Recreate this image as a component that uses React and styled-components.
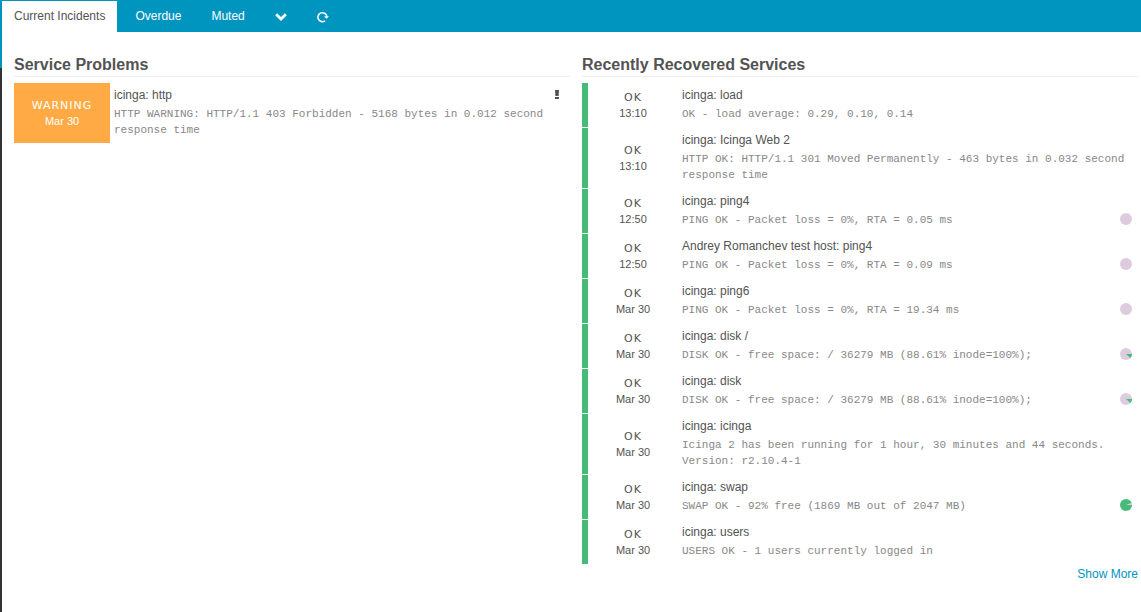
import React from "react";
import styled, { createGlobalStyle } from "styled-components";

const GlobalStyle = createGlobalStyle`
  * { box-sizing: border-box; }
  body {
    margin: 0;
    background: #fff;
    color: #535353;
    font: 12px/16px "Liberation Sans", Arial, sans-serif;
  }
`;

const Page = styled.div`
  display: flex;
  min-height: 100vh;
`;

const SidebarEdge = styled.div`
  flex: 0 0 2px;
  background: linear-gradient(#0095bf 68px, #333 68px);
`;

const Main = styled.main`
  flex: 1;
  min-width: 0;
`;

const TabBar = styled.nav`
  display: flex;
  gap: 6px;
  height: 32px;
  padding-top: 1px;
  background: #0095bf;
`;

const Tab = styled.a`
  padding: 0 12px;
  line-height: 31px;
  text-decoration: none;
  color: ${(p) => (p.$active ? "#535353" : "#fff")};
  background: ${(p) => (p.$active ? "#fff" : "transparent")};
`;

const TabButton = styled.button`
  display: flex;
  align-items: center;
  justify-content: center;
  width: 36px;
  padding: 0;
  border: 0;
  background: transparent;
  color: #fff;
`;

const Columns = styled.div`
  display: grid;
  grid-template-columns: 1fr 1fr;
  column-gap: 12px;
  align-items: start;
  padding: 22px 3px 0 12px;
`;

const Heading = styled.h1`
  margin: 0 0 5px;
  border-bottom: 1px solid #eee;
  font-size: 16px;
  line-height: 22px;
`;

const StateTable = styled.table`
  width: 100%;
  border-spacing: 0 1px;
`;

const StateCell = styled.td`
  width: 96px;
  padding: 2px 0 0;
  text-align: center;
  font-size: 11px;
  line-height: 16px;
  border-left: ${(p) => (p.$problem ? "0" : "6px solid #44bb77")};
  background: ${(p) => (p.$problem ? "#ffaa44" : "transparent")};
  color: ${(p) => (p.$problem ? "#fff" : "#535353")};
`;

const StateLabel = styled.div`
  letter-spacing: 1px;
  line-height: 14px;
  font-family: "DejaVu Sans", Verdana, sans-serif;
`;

const InfoCell = styled.td`
  padding: 4px 6px 5px 4px;
  vertical-align: top;
`;

const TitleLine = styled.div`
  display: flex;
  justify-content: space-between;
  height: 19px;
  padding-right: 4px;
`;

const OutputLine = styled.div`
  display: flex;
  justify-content: space-between;
  align-items: flex-start;
`;

const PieSlot = styled.span`
  padding-top: 1px;
`;

const Output = styled.p`
  margin: 0;
  color: #888;
  font: 11px/16px "Liberation Mono", "Courier New", monospace;
`;

const MoreLink = styled.a`
  display: block;
  width: fit-content;
  margin: 1px 0 0 auto;
  color: #0095bf;
  text-decoration: none;
`;

const Drawing = styled.svg`
  display: block;
  flex: none;
`;

const Chevron = () => (
  <Drawing width="12" height="8" viewBox="0 0 12 8" fill="none" stroke="currentColor" strokeWidth="2.8">
    <path d="M1.2 1.3 L6 6 L10.8 1.3" />
  </Drawing>
);

const Reload = () => (
  <Drawing width="12" height="12" viewBox="0 0 12 12">
    <path d="M8 9.9 A4.5 4.5 0 1 1 9.9 5.6" fill="none" stroke="currentColor" strokeWidth="1.5" />
    <path d="M7 5.2 H12 L9.6 7.8 Z" fill="currentColor" />
  </Drawing>
);

const Exclamation = () => (
  <Drawing width="6" height="16" viewBox="0 0 6 16" fill="currentColor">
    <path d="M1 3 H5 L4.6 9 H1.4 Z" />
    <rect x="1" y="10" width="4" height="2" />
  </Drawing>
);

const Pie = ({ kind }) => (
  <Drawing width="12" height="12" viewBox="0 0 12 12">
    <circle cx="6" cy="6" r="6" fill={kind === "full" ? "#44bb77" : "#ddccdd"} />
    {kind === "slice" && <path d="M6 6 H12 A6 6 0 0 1 10.5 10 Z" fill="#44bb77" />}
    {kind === "full" && <path d="M6 6 L11.5 3.7 A6 6 0 0 1 12 6 Z" fill="#ddccdd" />}
  </Drawing>
);

const problems = [
  {
    state: "WARNING",
    time: "Mar 30",
    title: "icinga: http",
    output: "HTTP WARNING: HTTP/1.1 403 Forbidden - 5168 bytes in 0.012 second response time",
  },
];

const recovered = [
  { time: "13:10", title: "icinga: load", output: "OK - load average: 0.29, 0.10, 0.14" },
  {
    time: "13:10",
    title: "icinga: Icinga Web 2",
    output: "HTTP OK: HTTP/1.1 301 Moved Permanently - 463 bytes in 0.032 second response time",
  },
  { time: "12:50", title: "icinga: ping4", output: "PING OK - Packet loss = 0%, RTA = 0.05 ms", pie: "empty" },
  { time: "12:50", title: "Andrey Romanchev test host: ping4", output: "PING OK - Packet loss = 0%, RTA = 0.09 ms", pie: "empty" },
  { time: "Mar 30", title: "icinga: ping6", output: "PING OK - Packet loss = 0%, RTA = 19.34 ms", pie: "empty" },
  { time: "Mar 30", title: "icinga: disk /", output: "DISK OK - free space: / 36279 MB (88.61% inode=100%);", pie: "slice" },
  { time: "Mar 30", title: "icinga: disk", output: "DISK OK - free space: / 36279 MB (88.61% inode=100%);", pie: "slice" },
  {
    time: "Mar 30",
    title: "icinga: icinga",
    output: "Icinga 2 has been running for 1 hour, 30 minutes and 44 seconds. Version: r2.10.4-1",
  },
  { time: "Mar 30", title: "icinga: swap", output: "SWAP OK - 92% free (1869 MB out of 2047 MB)", pie: "full" },
  { time: "Mar 30", title: "icinga: users", output: "USERS OK - 1 users currently logged in" },
];

const ServiceRow = ({ service, problem }) => (
  <tr>
    <StateCell $problem={problem}>
      <StateLabel>{service.state || "OK"}</StateLabel>
      {service.time}
    </StateCell>
    <InfoCell>
      <TitleLine>
        {service.title}
        {problem && <Exclamation />}
      </TitleLine>
      <OutputLine>
        <Output>{service.output}</Output>
        {service.pie && <PieSlot><Pie kind={service.pie} /></PieSlot>}
      </OutputLine>
    </InfoCell>
  </tr>
);

export default function App() {
  return (
    <Page>
      <GlobalStyle />
      <SidebarEdge />
      <Main>
        <TabBar>
          <Tab href="#current" $active>Current Incidents</Tab>
          <Tab href="#overdue">Overdue</Tab>
          <Tab href="#muted">Muted</Tab>
          <TabButton aria-label="More"><Chevron /></TabButton>
          <TabButton aria-label="Reload"><Reload /></TabButton>
        </TabBar>
        <Columns>
          <section>
            <Heading>Service Problems</Heading>
            <StateTable>
              <tbody>
                {problems.map((s) => <ServiceRow key={s.title} service={s} problem />)}
              </tbody>
            </StateTable>
          </section>
          <section>
            <Heading>Recently Recovered Services</Heading>
            <StateTable>
              <tbody>
                {recovered.map((s) => <ServiceRow key={s.title} service={s} />)}
              </tbody>
            </StateTable>
            <MoreLink href="#more">Show More</MoreLink>
          </section>
        </Columns>
      </Main>
    </Page>
  );
}
